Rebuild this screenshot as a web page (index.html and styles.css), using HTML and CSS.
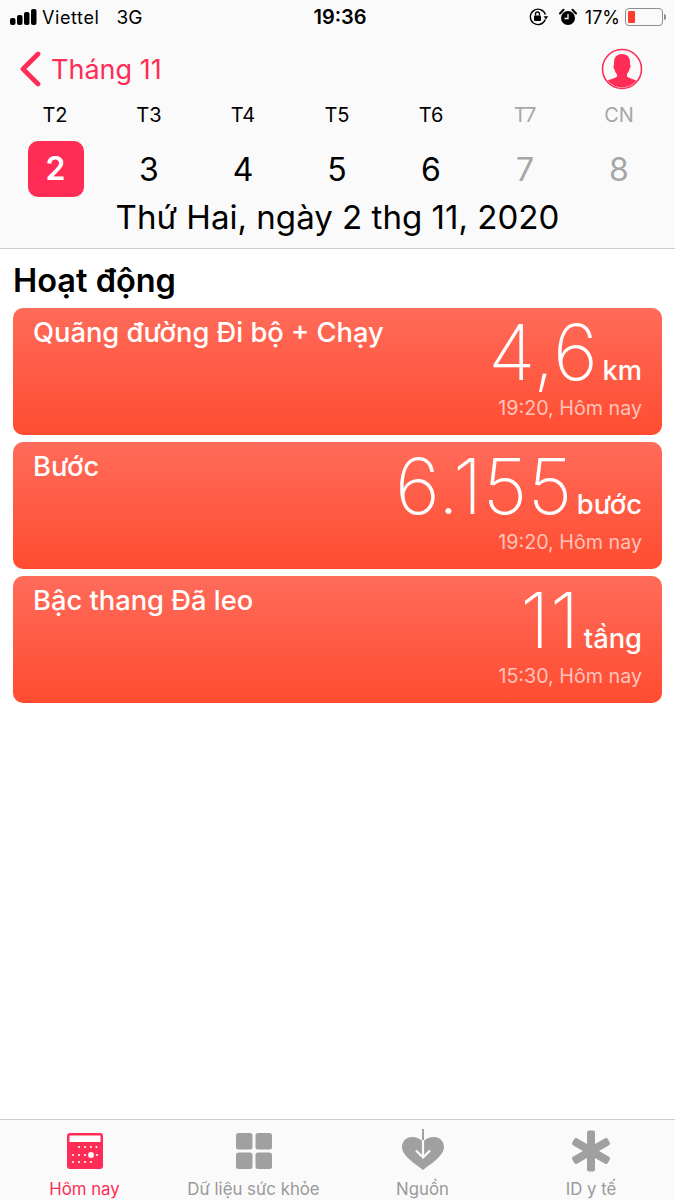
FILE: index.html
```html
<!DOCTYPE html>
<html lang="vi">
<head>
    <meta charset="UTF-8">
    <title>Sức khỏe</title>
    <link rel="stylesheet" href="styles.css">
</head>
<body>
    <div id="header">
        <div class="status">
            <div class="status-left">
                <svg class="signal" width="27" height="16" viewBox="0 0 27 16"><rect x="0" y="9" width="5.500" height="7" rx="2"/><rect x="7" y="6" width="5.500" height="10" rx="2"/><rect x="14" y="3" width="5.500" height="13" rx="2"/><rect x="21" y="0" width="5.500" height="16" rx="2"/></svg>
                <span>Viettel</span>
                <span class="net">3G</span>
            </div>
            <div class="clock">19:36</div>
            <div class="status-right">
                <svg class="lock" width="20" height="18" viewBox="0 0 20 18"><path d="M16.300 11.500A7.700 7.700 0 1 1 16.400 6.500" fill="none" stroke="#000" stroke-width="1.400"/><path d="M14.600 8.200h4.600l-2.300 3.200z"/><rect x="5" y="7.500" width="7" height="5.500" rx="1"/><path d="M6.500 7.500V6a2 2 0 0 1 4 0v1.500" fill="none" stroke="#000" stroke-width="1.300"/></svg>
                <svg class="alarm" width="18" height="18" viewBox="0 0 18 18"><circle cx="9" cy="10" r="7"/><path d="M1 5.500 4.500 1.800M17 5.500 13.500 1.800" stroke="#000" stroke-width="2" stroke-linecap="round"/><path d="M9 6v4.500H5.500" fill="none" stroke="#fbfbfb" stroke-width="1.300"/></svg>
                <span class="pct">17%</span>
                <div class="battery"><div class="battery-level"></div></div>
                <div class="battery-tip"></div>
            </div>
        </div>

        <div class="nav">
            <div class="back">
                <svg width="24" height="36" viewBox="0 0 24 36"><path d="M20 3 5 18l15 15" fill="none" stroke="#ff2d55" stroke-width="4.600" stroke-linecap="round" stroke-linejoin="round"/></svg>
                <span>Tháng 11</span>
            </div>
            <svg class="profile" width="42" height="42" viewBox="0 0 42 42">
                <defs><clipPath id="round"><circle cx="21" cy="21" r="18.500"/></clipPath></defs>
                <circle cx="21" cy="21" r="19.500" fill="none" stroke="#ff2d55" stroke-width="1.600"/>
                <path clip-path="url(#round)" fill="#ff2d55" d="M21 6c5.500 0 8 3.500 8 8.500 0 1 0 2 .1 2.500.8.300.7 2.300-.5 3.800-.6 2.500-1.700 4.300-2.600 5.200v2.500c1 1.500 9 3 11 5.500v6H5v-6c2-2.500 10-4 11-5.500V26.500c-.9-.9-2-2.700-2.600-5.200-1.200-1.500-1.300-3.500-.5-3.800.1-.5.100-1.500.1-2.500C13 9.500 15.500 6 21 6z"/>
            </svg>
        </div>

        <div class="week">
            <div class="cell">T2</div>
            <div class="cell">T3</div>
            <div class="cell">T4</div>
            <div class="cell">T5</div>
            <div class="cell">T6</div>
            <div class="cell off">T7</div>
            <div class="cell off">CN</div>
        </div>
        <div class="days">
            <div class="cell"><span class="today">2</span></div>
            <div class="cell">3</div>
            <div class="cell">4</div>
            <div class="cell">5</div>
            <div class="cell">6</div>
            <div class="cell off">7</div>
            <div class="cell off">8</div>
        </div>
        <div class="date">Thứ Hai, ngày 2 thg 11, 2020</div>
    </div>

    <div id="content">
        <h1>Hoạt động</h1>
        <div class="card">
            <div class="card-title">Quãng đường Đi bộ + Chạy</div>
            <div class="card-side">
                <div class="value"><span class="num">4,6</span><span class="unit">km</span></div>
                <div class="when">19:20, Hôm nay</div>
            </div>
        </div>
        <div class="card">
            <div class="card-title">Bước</div>
            <div class="card-side">
                <div class="value"><span class="num">6.155</span><span class="unit">bước</span></div>
                <div class="when">19:20, Hôm nay</div>
            </div>
        </div>
        <div class="card">
            <div class="card-title">Bậc thang Đã leo</div>
            <div class="card-side">
                <div class="value"><span class="num">11</span><span class="unit">tầng</span></div>
                <div class="when">15:30, Hôm nay</div>
            </div>
        </div>
    </div>

    <div id="tabs">
        <div class="tab active">
            <div class="tab-icon">
                <svg width="36" height="36" viewBox="0 0 36 36">
                    <rect width="36" height="36" rx="3" fill="#ff2d55"/>
                    <rect x="2.500" y="2.500" width="31" height="6.500" fill="#fff"/>
                    <g fill="#fff">
                        <circle cx="12" cy="14" r="1.100"/><circle cx="18" cy="14" r="1.100"/><circle cx="24" cy="14" r="1.100"/><circle cx="29.500" cy="14" r="1.100"/>
                        <circle cx="6" cy="22" r="1.100"/><circle cx="12" cy="22" r="1.100"/><circle cx="18" cy="22" r="1.100"/><circle cx="24" cy="22" r="2.900"/><circle cx="30" cy="22" r="1.100"/>
                        <circle cx="6" cy="29" r="1.100"/><circle cx="12" cy="29" r="1.100"/><circle cx="18" cy="29" r="1.100"/><circle cx="24" cy="29" r="1.100"/>
                    </g>
                </svg>
            </div>
            <span>Hôm nay</span>
        </div>
        <div class="tab">
            <div class="tab-icon">
                <svg width="36" height="36" viewBox="0 0 36 36" fill="#a0a0a0">
                    <rect width="16.500" height="16.500" rx="2.500"/><rect x="19.500" width="16.500" height="16.500" rx="2.500"/>
                    <rect y="19.500" width="16.500" height="16.500" rx="2.500"/><rect x="19.500" y="19.500" width="16.500" height="16.500" rx="2.500"/>
                </svg>
            </div>
            <span>Dữ liệu sức khỏe</span>
        </div>
        <div class="tab">
            <div class="tab-icon">
                <svg width="42" height="44" viewBox="0 0 42 44">
                    <path fill="#a0a0a0" d="M21 41C14 35.500 0 27 0 18 0 12 4.500 8 10 8c4.500 0 8.500 1.800 11 4.500C23.500 9.800 27.500 8 32 8c5.500 0 10 4 10 10 0 9-14 17.500-21 23z"/>
                    <path d="M21 0v11" stroke="#a0a0a0" stroke-width="2" fill="none"/>
                    <path d="M21 11v17M14 21.500 21 28.500l7-7" stroke="#fafafa" stroke-width="2.200" fill="none"/>
                </svg>
            </div>
            <span>Nguồn</span>
        </div>
        <div class="tab">
            <div class="tab-icon">
                <svg width="40" height="42" viewBox="0 0 40 42" fill="#a0a0a0">
                    <rect x="16" y="0.500" width="8" height="41" rx="2"/>
                    <rect x="16" y="0.500" width="8" height="41" rx="2" transform="rotate(60 20 21)"/>
                    <rect x="16" y="0.500" width="8" height="41" rx="2" transform="rotate(-60 20 21)"/>
                </svg>
            </div>
            <span>ID y tế</span>
        </div>
    </div>
</body>
</html>
```

FILE: styles.css
```css
* {
    margin: 0;
    padding: 0;
    box-sizing: border-box;
}

body {
    font-family: Inter, "Noto Sans", sans-serif;
    background-color: #fff;
    color: #000;
    height: 1200px;
    display: flex;
    flex-direction: column;
    overflow: hidden;
}

#header {
    background-color: #fafafa;
    border-bottom: 1px solid #cfcfcf;
    height: 249px;
}

.status {
    height: 34px;
    padding: 0 9px 0 10px;
    display: flex;
    align-items: center;
    justify-content: space-between;
    font-size: 18px;
}

.status-left,
.status-right {
    width: 210px;
    display: flex;
    align-items: center;
}

.status-left span {
    margin-left: 5px;
    letter-spacing: 0.6px;
}

.status-left .net {
    margin-left: 17px;
    font-size: 19px;
    letter-spacing: 0;
}

.status-right {
    justify-content: flex-end;
}

.clock {
    font-weight: 600;
    font-size: 20px;
    margin-left: 4px;
}

.lock {
    margin-right: 10px;
}

.alarm {
    margin-right: 8px;
}

.pct {
    margin-right: 5px;
    font-size: 18px;
}

.battery {
    width: 38px;
    height: 18px;
    border: 1px solid #8e8e8e;
    border-radius: 4px;
    padding: 2px;
}

.battery-level {
    width: 7px;
    height: 100%;
    background-color: #ff3b30;
    border-radius: 1px;
}

.battery-tip {
    width: 2px;
    height: 6px;
    background-color: #8e8e8e;
    margin-left: 1px;
    border-radius: 0 2px 2px 0;
}

.nav {
    height: 56px;
    padding: 14px 32px 0 18px;
    display: flex;
    align-items: center;
    justify-content: space-between;
}

.back {
    display: flex;
    align-items: center;
    color: #ff2d55;
    font-size: 27px;
}

.back span {
    margin-left: 9px;
}

.week,
.days {
    display: grid;
    grid-template-columns: repeat(7, 94px);
    padding-left: 8px;
    text-align: center;
}

.week {
    height: 48px;
    font-size: 20px;
    padding-top: 13px;
    line-height: 24px;
}

.days {
    height: 58px;
    font-size: 32px;
    line-height: 58px;
    padding-top: 3px;
}

.off {
    color: #a6a6a6;
}

.today {
    display: inline-block;
    width: 56px;
    height: 56px;
    line-height: 56px;
    border-radius: 10px;
    background-color: #ff2d55;
    color: #fff;
    font-weight: 600;
    vertical-align: 1px;
    margin-left: 1px;
}

.date {
    font-size: 33.100px;
    text-align: center;
    line-height: 40px;
    margin-top: 1px;
}

#content {
    flex-grow: 1;
    padding: 0 13px;
}

h1 {
    font-size: 32.500px;
    font-weight: 600;
    line-height: 38px;
    padding-top: 13px;
    height: 59px;
}

.card {
    height: 127px;
    margin-bottom: 7px;
    border-radius: 10px;
    background: linear-gradient(#ff6b5a, #ff4c30);
    color: #fff;
    padding: 9px 20px;
    display: flex;
    justify-content: space-between;
}

.card-title {
    font-size: 27.300px;
    font-weight: 500;
    line-height: 32px;
}

.card-side {
    display: flex;
    flex-direction: column;
    align-items: flex-end;
}

.value {
    display: flex;
    align-items: baseline;
    height: 80px;
}

.num {
    font-size: 77px;
    font-weight: 200;
    line-height: 70px;
    letter-spacing: 0.5px;
}

.unit {
    font-size: 27.300px;
    font-weight: 500;
    margin-left: 4px;
}

.when {
    font-size: 19.700px;
    line-height: 22px;
    color: #ffc4bb;
}

#tabs {
    height: 81px;
    border-top: 1px solid #cfcfcf;
    background-color: #fafafa;
    display: grid;
    grid-template-columns: 169px 169px 169px 168px;
    padding-top: 9px;
}

.tab {
    display: flex;
    flex-direction: column;
    align-items: center;
    font-size: 16.800px;
    color: #999;
}

.tab.active {
    color: #ff2d55;
}

.tab-icon {
    height: 44px;
    margin-bottom: 5px;
    display: flex;
    align-items: center;
}

.tab span {
    line-height: 22px;
    white-space: nowrap;
}
```
